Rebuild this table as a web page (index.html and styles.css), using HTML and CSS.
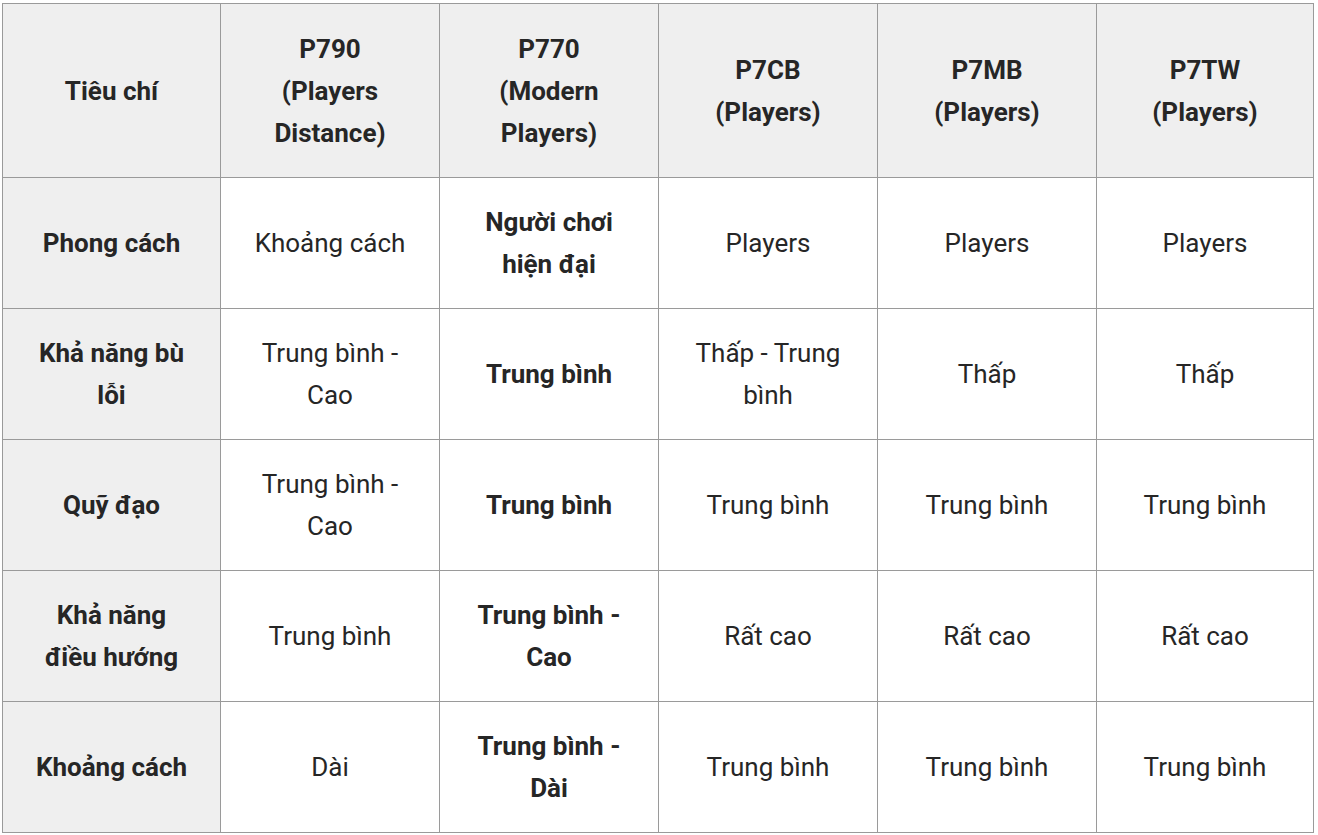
FILE: index.html
```html
<!DOCTYPE html>
<html lang="vi">
<head>
<meta charset="utf-8">
<link rel="stylesheet" href="styles.css">
</head>
<body>
<table class="cmp">
  <colgroup>
    <col class="c0"><col class="c1"><col class="c2"><col class="c3"><col class="c4"><col class="c5">
  </colgroup>
  <thead>
    <tr class="head">
      <th>Tiêu chí</th>
      <th>P790<br>(Players<br>Distance)</th>
      <th>P770<br>(Modern<br>Players)</th>
      <th>P7CB<br>(Players)</th>
      <th>P7MB<br>(Players)</th>
      <th>P7TW<br>(Players)</th>
    </tr>
  </thead>
  <tbody>
    <tr>
      <th>Phong cách</th>
      <td>Khoảng cách</td>
      <td class="b">Người chơi<br>hiện đại</td>
      <td>Players</td>
      <td>Players</td>
      <td>Players</td>
    </tr>
    <tr>
      <th>Khả năng bù<br>lỗi</th>
      <td>Trung bình -<br>Cao</td>
      <td class="b">Trung bình</td>
      <td>Thấp - Trung<br>bình</td>
      <td>Thấp</td>
      <td>Thấp</td>
    </tr>
    <tr>
      <th>Quỹ đạo</th>
      <td>Trung bình -<br>Cao</td>
      <td class="b">Trung bình</td>
      <td>Trung bình</td>
      <td>Trung bình</td>
      <td>Trung bình</td>
    </tr>
    <tr>
      <th>Khả năng<br>điều hướng</th>
      <td>Trung bình</td>
      <td class="b">Trung bình -<br>Cao</td>
      <td>Rất cao</td>
      <td>Rất cao</td>
      <td>Rất cao</td>
    </tr>
    <tr>
      <th>Khoảng cách</th>
      <td>Dài</td>
      <td class="b">Trung bình -<br>Dài</td>
      <td>Trung bình</td>
      <td>Trung bình</td>
      <td>Trung bình</td>
    </tr>
  </tbody>
</table>
</body>
</html>
```

FILE: styles.css
```css
html, body {
  margin: 0;
  padding: 0;
  background: #ffffff;
}
body {
  padding: 3px 0 0 2px;
  font-family: Roboto, "Liberation Sans", Arial, sans-serif;
  color: #262626;
}
.cmp {
  border-collapse: collapse;
  table-layout: fixed;
  width: 1311px;
}
.c0 { width: 218px; }
.c1, .c2, .c3, .c4 { width: 219px; }
.c5 { width: 217px; }
.cmp th, .cmp td {
  border: 1px solid #9a9a9a;
  text-align: center;
  vertical-align: middle;
  font-size: 26px;
  line-height: 42px;
  padding: 0 6px;
}
.cmp th {
  background: #efefef;
  font-weight: 700;
}
.cmp td {
  font-weight: 400;
  background: #ffffff;
}
.cmp td.b {
  font-weight: 700;
}
.head th {
  height: 173px;
}
.cmp tbody tr {
  height: 131px;
}
```
